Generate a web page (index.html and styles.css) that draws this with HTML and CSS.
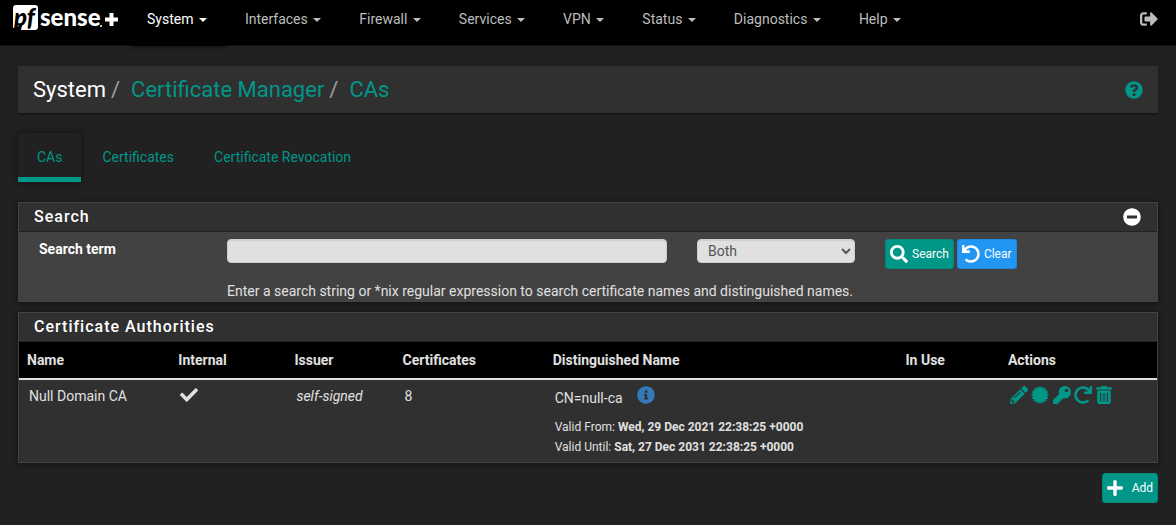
FILE: index.html
```html
<!DOCTYPE html>
<html lang="en">
<head>
<meta charset="utf-8">
<meta name="viewport" content="width=device-width, initial-scale=1">
<title>System: Certificate Manager: CAs</title>
<link rel="stylesheet" href="styles.css">
</head>
<body>
<header class="navbar">
  <a class="brand" href="#" aria-label="pfSense Plus home">
    <svg class="logo" viewBox="0 -3 106 36" aria-hidden="true">
      <path class="logo-tile" d="M3 2H22Q25 2 25 5V24Q25 27 22 27H8L9 22L0 25V5Q0 2 3 2Z"/>
      <text class="logo-text logo-pf" x="1" y="23">pf</text>
      <text class="logo-text" x="27" y="23">sense</text>
      <circle class="logo-tile" cx="88" cy="23" r="1"/>
      <path class="logo-plus" d="M92 16.500H105M98.500 10V23"/>
    </svg>
  </a>
  <nav class="menu">
    <a class="menu-item active" href="#">System <span class="caret"></span></a>
    <a class="menu-item" href="#">Interfaces <span class="caret"></span></a>
    <a class="menu-item" href="#">Firewall <span class="caret"></span></a>
    <a class="menu-item" href="#">Services <span class="caret"></span></a>
    <a class="menu-item" href="#">VPN <span class="caret"></span></a>
    <a class="menu-item" href="#">Status <span class="caret"></span></a>
    <a class="menu-item" href="#">Diagnostics <span class="caret"></span></a>
    <a class="menu-item" href="#">Help <span class="caret"></span></a>
  </nav>
  <a class="logout" href="#" aria-label="Logout">
    <svg class="icon" viewBox="0 0 512 512"><path d="M497 273L329 441c-15 15-41 4.500-41-17v-96H152c-13.300 0-24-10.700-24-24v-96c0-13.300 10.700-24 24-24h136V88c0-21.400 25.900-32 41-17l168 168c9.300 9.400 9.300 24.600 0 34zM192 436v-40c0-6.600-5.400-12-12-12H96c-17.700 0-32-14.300-32-32V160c0-17.700 14.300-32 32-32h84c6.600 0 12-5.400 12-12V76c0-6.600-5.400-12-12-12H96c-53 0-96 43-96 96v192c0 53 43 96 96 96h84c6.600 0 12-5.400 12-12z"/></svg>
  </a>
</header>

<main class="page">
  <div class="page-head">
    <h1 class="crumbs">
      <span>System</span><span class="slash">/</span>
      <a href="#">Certificate Manager</a><span class="slash">/</span>
      <a href="#">CAs</a>
    </h1>
    <a class="help" href="#" aria-label="Help for this page">
      <svg class="icon" viewBox="0 0 512 512"><path d="M504 256c0 136.997-111.043 248-248 248S8 392.997 8 256C8 119.083 119.043 8 256 8s248 111.083 248 248zM262.655 90c-54.497 0-89.255 22.957-116.549 63.758-3.536 5.286-2.353 12.415 2.715 16.258l34.699 26.310c5.205 3.947 12.621 3.008 16.665-2.122 17.864-22.658 30.113-35.797 57.303-35.797 20.429 0 45.698 13.148 45.698 32.958 0 14.976-12.363 22.667-32.534 33.976C247.128 238.528 216 254.941 216 296v4c0 6.627 5.373 12 12 12h56c6.627 0 12-5.373 12-12v-1.333c0-28.462 83.186-29.647 83.186-106.667 0-58.002-60.165-102-116.531-102zM256 338c-25.365 0-46 20.635-46 46 0 25.364 20.635 46 46 46s46-20.636 46-46c0-25.365-20.635-46-46-46z"/></svg>
    </a>
  </div>

  <nav class="tabs">
    <a class="tab active" href="#">CAs</a>
    <a class="tab" href="#">Certificates</a>
    <a class="tab" href="#">Certificate Revocation</a>
  </nav>

  <section class="panel search-panel">
    <div class="panel-head">
      <h2>Search</h2>
      <button class="toggle" type="button" aria-label="Collapse search">
        <svg class="icon" viewBox="0 0 512 512"><path d="M256 8C119 8 8 119 8 256s111 248 248 248 248-111 248-248S393 8 256 8zM124 296c-6.600 0-12-5.400-12-12v-56c0-6.600 5.400-12 12-12h264c6.600 0 12 5.400 12 12v56c0 6.600-5.400 12-12 12H124z"/></svg>
      </button>
    </div>
    <form class="search-form">
      <label class="search-label" for="term">Search term</label>
      <div class="field"><input class="control" id="term" type="text"></div>
      <div class="field">
        <select class="control" aria-label="Search in">
          <option>Name</option>
          <option>Distinguished Name</option>
          <option selected>Both</option>
        </select>
      </div>
      <div class="field buttons">
        <button class="btn btn-teal" type="button">
          <svg class="icon" viewBox="0 0 512 512"><path d="M505 442.700L405.300 343c-4.500-4.500-10.600-7-17-7H372c27.600-35.300 44-79.700 44-128C416 93.100 322.900 0 208 0S0 93.100 0 208s93.100 208 208 208c48.300 0 92.700-16.400 128-44v16.300c0 6.400 2.500 12.500 7 17l99.700 99.700c9.400 9.400 24.600 9.400 33.900 0l28.300-28.300c9.400-9.400 9.400-24.600.1-34zM208 336c-70.700 0-128-57.200-128-128 0-70.700 57.200-128 128-128 70.700 0 128 57.200 128 128 0 70.700-57.200 128-128 128z"/></svg>Search</button>
        <button class="btn btn-blue" type="button">
          <svg class="icon" viewBox="0 0 512 512"><path d="M212.333 224.333H12c-6.627 0-12-5.373-12-12V12C0 5.373 5.373 0 12 0h48c6.627 0 12 5.373 12 12v78.112C117.773 39.279 184.260 7.470 258.175 8.007c136.906.994 246.448 111.623 246.157 248.532C504.041 393.258 393.120 504 256.333 504c-64.089 0-122.496-24.313-166.510-64.215-5.099-4.622-5.334-12.554-.467-17.420l33.967-33.967c4.474-4.474 11.662-4.717 16.401-.525C170.760 415.336 211.580 432 256.333 432c97.268 0 176-78.716 176-176 0-97.267-78.716-176-176-176-58.496 0-110.280 28.476-142.274 72.333h98.274c6.627 0 12 5.373 12 12v48c0 6.627-5.373 12-12 12z"/></svg>Clear</button>
      </div>
      <p class="hint">Enter a search string or *nix regular expression to search certificate names and distinguished names.</p>
    </form>
  </section>

  <section class="panel">
    <div class="panel-head"><h2>Certificate Authorities</h2></div>
    <table class="cas">
      <colgroup>
        <col class="c-name"><col class="c-internal"><col class="c-issuer"><col class="c-certs"><col class="c-dn"><col class="c-use"><col class="c-actions">
      </colgroup>
      <thead>
        <tr><th>Name</th><th>Internal</th><th>Issuer</th><th>Certificates</th><th>Distinguished Name</th><th>In Use</th><th>Actions</th></tr>
      </thead>
      <tbody>
        <tr>
          <td>Null Domain CA</td>
          <td><svg class="icon" viewBox="0 0 512 512" role="img" aria-label="Yes"><path d="M173.898 439.404l-166.400-166.400c-9.997-9.997-9.997-26.206 0-36.204l36.203-36.204c9.997-9.998 26.207-9.998 36.204 0L192 312.690 432.095 72.596c9.997-9.997 26.207-9.997 36.204 0l36.203 36.204c9.997 9.997 9.997 26.206 0 36.204l-294.400 294.401c-9.998 9.997-26.207 9.997-36.204-.001z"/></svg></td>
          <td><i>self-signed</i></td>
          <td>8</td>
          <td>
            <div class="dn"><span>CN=null-ca</span>
              <button class="info" type="button" aria-label="Details"><svg class="icon" viewBox="0 0 512 512"><path d="M256 8C119.043 8 8 119.083 8 256c0 136.997 111.043 248 248 248s248-111.003 248-248C504 119.083 392.957 8 256 8zm0 110c23.196 0 42 18.804 42 42s-18.804 42-42 42-42-18.804-42-42 18.804-42 42-42zm56 254c0 6.627-5.373 12-12 12h-88c-6.627 0-12-5.373-12-12v-24c0-6.627 5.373-12 12-12h12v-64h-12c-6.627 0-12-5.373-12-12v-24c0-6.627 5.373-12 12-12h64c6.627 0 12 5.373 12 12v100h12c6.627 0 12 5.373 12 12v24z"/></svg></button>
            </div>
            <div class="valid">Valid From: <b>Wed, 29 Dec 2021 22:38:25 +0000</b></div>
            <div class="valid">Valid Until: <b>Sat, 27 Dec 2031 22:38:25 +0000</b></div>
          </td>
          <td></td>
          <td class="actions">
            <a href="#" aria-label="Edit CA"><svg class="icon" viewBox="0 0 512 512"><path d="M497.900 142.100l-46.100 46.100c-4.700 4.700-12.300 4.700-17 0l-111-111c-4.700-4.700-4.700-12.300 0-17l46.100-46.100c18.700-18.700 49.100-18.700 67.900 0l60.100 60.100c18.800 18.700 18.800 49.100 0 67.900zM284.200 99.800L21.600 362.400.4 483.900c-2.900 16.400 11.400 30.600 27.800 27.800l121.500-21.300 262.600-262.600c4.700-4.700 4.700-12.300 0-17l-111-111c-4.800-4.700-12.400-4.700-17.100 0zM124.100 339.900c-5.500-5.500-5.500-14.300 0-19.800l154-154c5.500-5.500 14.300-5.500 19.800 0s5.500 14.300 0 19.800l-154 154c-5.500 5.500-14.300 5.500-19.800 0zM88 424h48v36.300l-64.500 11.300-31.100-31.100L51.700 376H88v48z"/></svg></a>
            <a href="#" aria-label="Export CA"><svg class="icon" viewBox="-256 -256 512 512"><path class="seal" d="M0 -250L39 -197L96 -231L112 -167L177 -177L167 -112L231 -96L197 -39L250 0L197 39L231 96L167 112L177 177L112 167L96 231L39 197L0 250L-39 197L-96 231L-112 167L-177 177L-167 112L-231 96L-197 39L-250 0L-197 -39L-231 -96L-167 -112L-177 -177L-112 -167L-96 -231L-39 -197Z"/></svg></a>
            <a href="#" aria-label="Export key"><svg class="icon" viewBox="0 0 512 512"><path d="M512 176.001C512 273.203 433.202 352 336 352c-11.220 0-22.190-1.062-32.827-3.069l-24.012 27.014A23.999 23.999 0 0 1 261.223 384H224v40c0 13.255-10.745 24-24 24h-40v40c0 13.255-10.745 24-24 24H24c-13.255 0-24-10.745-24-24v-78.059c0-6.365 2.529-12.470 7.029-16.971l161.802-161.802C163.108 213.814 160 195.271 160 176 160 78.798 238.797.001 335.999 0 433.488-.001 512 78.511 512 176.001zM336 128c0 26.510 21.490 48 48 48s48-21.490 48-48-21.490-48-48-48-48 21.490-48 48z"/></svg></a>
            <a href="#" aria-label="Renew CA"><svg class="icon" viewBox="0 0 512 512"><path d="M500.330 0h-47.410a12 12 0 0 0-12 12.570l4 82.760A247.420 247.420 0 0 0 256 8C119.340 8 7.900 119.530 8 256.190 8.100 393.070 119.100 504 256 504a247.100 247.100 0 0 0 166.180-63.910 12 12 0 0 0 .48-17.430l-34-34a12 12 0 0 0-16.380-.55A176 176 0 1 1 402.100 157.800l-101.530-4.870a12 12 0 0 0-12.570 12v47.410a12 12 0 0 0 12 12h200.330a12 12 0 0 0 12-12V12a12 12 0 0 0-12-12z"/></svg></a>
            <a href="#" aria-label="Delete CA"><svg class="icon icon-narrow" viewBox="0 0 448 512"><path d="M32 464a48 48 0 0 0 48 48h288a48 48 0 0 0 48-48V128H32zm272-256a16 16 0 0 1 32 0v224a16 16 0 0 1-32 0zm-96 0a16 16 0 0 1 32 0v224a16 16 0 0 1-32 0zm-96 0a16 16 0 0 1 32 0v224a16 16 0 0 1-32 0zM432 32H312l-9.400-18.700A24 24 0 0 0 281.100 0H166.800a23.720 23.720 0 0 0-21.400 13.300L136 32H16A16 16 0 0 0 0 48v32a16 16 0 0 0 16 16h416a16 16 0 0 0 16-16V48a16 16 0 0 0-16-16z"/></svg></a>
          </td>
        </tr>
      </tbody>
    </table>
  </section>

  <div class="footer-actions">
    <button class="btn btn-teal btn-add" type="button">
      <svg class="icon icon-narrow" viewBox="0 0 448 512"><path d="M416 208H272V64c0-17.670-14.330-32-32-32h-32c-17.670 0-32 14.330-32 32v144H32c-17.670 0-32 14.330-32 32v32c0 17.670 14.330 32 32 32h144v144c0 17.670 14.330 32 32 32h32c17.670 0 32-14.330 32-32V304h144c17.670 0 32-14.330 32-32v-32c0-17.670-14.330-32-32-32z"/></svg>Add</button>
  </div>
</main>
</body>
</html>
```
FILE: styles.css
```css
* { box-sizing: border-box; }

body {
  margin: 0;
  background: #212121;
  color: #e0e0e0;
  font: 14px/20px Roboto, "Liberation Sans", sans-serif;
}

a { color: #009688; text-decoration: none; }
h1, h2, p { margin: 0; font-weight: 400; }
button, input, select { font: inherit; }

.icon {
  width: 18px;
  height: 18px;
  fill: currentColor;
  flex: none;
}
.icon-narrow { width: 16px; }
.seal { stroke: currentColor; stroke-width: 12; stroke-linejoin: round; }

/* Top bar */
.navbar {
  display: flex;
  height: 46px;
  padding: 0 18px 0 13px;
  background: #000;
  border-bottom: 1px solid #121212;
}
.brand { width: 118px; }
.logo { display: block; width: 106px; height: 36px; overflow: visible; }
.logo-tile { fill: #fff; }
.logo-text {
  fill: #fff;
  font: 900 24px Lato, sans-serif;
}
.logo-pf {
  fill: #000;
  font-style: italic;
}
.logo-plus { stroke: #fff; stroke-width: 4; }

.menu { display: flex; flex: 1; }
.menu-item {
  height: 46px;
  padding: 9px 20px 0 18px;
  color: #bdbdbd;
  white-space: nowrap;
}
.menu-item.active {
  padding-left: 16px;
  color: #fff;
  background: #000;
  box-shadow: 0 0 6px rgba(0, 0, 0, 0.6);
}
.caret {
  display: inline-block;
  border: 4px solid transparent;
  border-top-color: currentColor;
  border-bottom: 0;
  margin-left: 2px;
  vertical-align: middle;
}
.logout { display: flex; align-items: center; padding-bottom: 8px; color: #bdbdbd; }

.page { padding: 20px 18px; }

/* Title row */
.page-head {
  display: flex;
  align-items: center;
  justify-content: space-between;
  height: 47px;
  padding: 0 15px;
  background: #303030;
  box-shadow: 0 1px 2px rgba(0, 0, 0, 0.5);
}
.crumbs {
  display: flex;
  color: #fff;
  font-size: 22px;
  line-height: 26px;
}
.slash { padding: 0 11px 0 5px; color: #9e9e9e; }
.help { display: flex; }

/* Tabs */
.tabs { display: flex; gap: 2px; margin: 20px 0; }
.tab { padding: 14px 19px 10px; border-bottom: 5px solid transparent; }
.tab.active {
  border-bottom-color: #009688;
  box-shadow: 0 0 8px rgba(0, 0, 0, 0.5);
}

/* Panels */
.panel {
  margin-bottom: 10px;
  background: #303030;
  border: 1px solid #424242;
  box-shadow: 0 1px 6px rgba(0, 0, 0, 0.5);
}
.panel-head {
  display: flex;
  align-items: center;
  justify-content: space-between;
  height: 29px;
  padding: 0 16px 0 15px;
  border-bottom: 1px solid #212121;
  color: #fff;
}
.panel-head h2 {
  font-size: 16px;
  font-weight: 500;
  letter-spacing: 1px;
}
.toggle, .info {
  display: flex;
  padding: 0;
  border: 0;
  background: none;
  color: #fff;
}

.search-form {
  display: grid;
  grid-template-columns: 2fr 5fr 2fr 3fr;
  padding: 7px 5px 0;
  background: #424242;
}
.search-label { padding: 0 15px; color: #fff; font-weight: 700; }
.field { min-width: 0; padding: 0 15px; }
.control {
  display: block;
  width: 100%;
  height: 24px;
  padding: 0 6px;
  border: 1px solid #ccc;
  border-radius: 4px;
  background: #e0e0e0;
  color: #555;
  box-shadow: inset 0 1px 1px rgba(0, 0, 0, 0.08);
}
.hint { grid-column: 2 / -1; padding: 12px 15px 0; }

.buttons { display: flex; gap: 3px; }
.btn {
  display: flex;
  align-items: center;
  gap: 4px;
  height: 30px;
  padding: 0 4px;
  border: 1px solid;
  border-radius: 3px;
  color: #fff;
  font-size: 12px;
}
.btn-teal { background: #009688; border-color: #00897b; }
.btn-blue { background: #2196f3; border-color: #1e88e5; }

/* Table */
.cas { width: 100%; border-collapse: collapse; table-layout: fixed; }
.c-name { width: 13.3%; }
.c-internal { width: 10.2%; }
.c-issuer { width: 9.5%; }
.c-certs { width: 13.2%; }
.c-dn { width: 31%; }
.c-use { width: 9%; }
.c-actions { width: 13.8%; }
.cas th {
  height: 37px;
  padding: 0 8px;
  background: #000;
  border-bottom: 2px solid #e0e0e0;
  text-align: left;
}
.cas td { padding: 6px 10px 5px; vertical-align: top; }
.cas td .icon { display: block; }
.dn { display: flex; gap: 14px; margin-bottom: 9px; }
.dn span { padding-top: 2px; }
.info { color: #337ab7; }
.valid { font-size: 12px; }
.actions a { display: inline-block; }

.footer-actions { display: flex; justify-content: flex-end; }
.btn-add { gap: 9px; }
```
